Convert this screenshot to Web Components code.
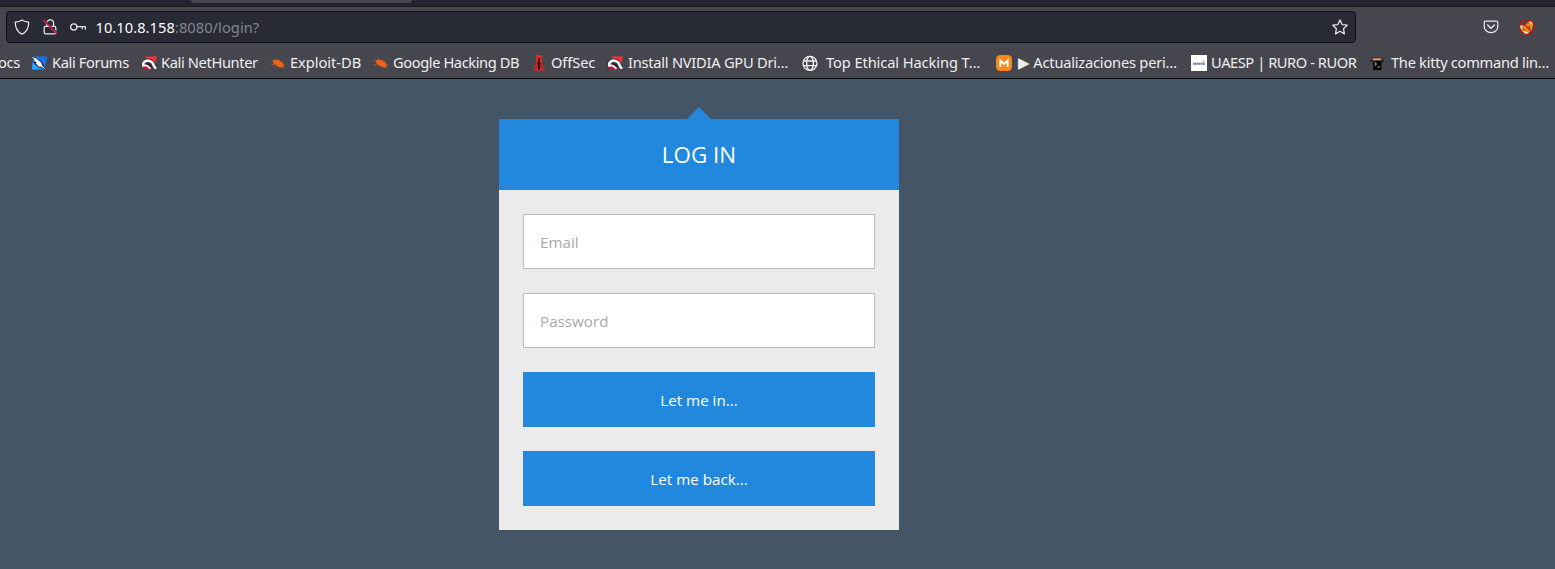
<!DOCTYPE html>
<html lang="en"><head><meta charset="utf-8"><title>Login</title>
<style>html,body{margin:0;height:100%;overflow:hidden}body{background:#456}</style></head>
<body>
<browser-window>
  <tab-strip slot="chrome"></tab-strip>
  <nav-bar slot="chrome"></nav-bar>
  <bookmarks-bar slot="chrome">
    <book-mark style="width:33px;margin-left:-2px;letter-spacing:-.3px">ocs</book-mark>
    <book-mark icon="forums" style="width:110px;--gap:5px;letter-spacing:-.38px">Kali Forums</book-mark>
    <book-mark icon="hunter" style="width:129px;letter-spacing:-.37px">Kali NetHunter</book-mark>
    <book-mark icon="bug" style="width:103px;letter-spacing:-.04px">Exploit-DB</book-mark>
    <book-mark icon="bug" style="width:158px;letter-spacing:-.41px">Google Hacking DB</book-mark>
    <book-mark icon="tower" style="width:76px;letter-spacing:-.1px">OffSec</book-mark>
    <book-mark icon="hunter" style="width:195px;--gap:5px;letter-spacing:-.25px">Install NVIDIA GPU Dri…</book-mark>
    <book-mark icon="globe" style="width:194px;--gap:8px;letter-spacing:-.1px">Top Ethical Hacking T…</book-mark>
    <book-mark icon="m" style="width:195px;--gap:6px;letter-spacing:-.22px">▶ Actualizaciones peri…</book-mark>
    <book-mark icon="uaesp" style="width:178px;letter-spacing:-.44px">UAESP | RURO - RUOR</book-mark>
    <book-mark icon="kitty" style="width:184px;--gap:6px;letter-spacing:-.29px">The kitty command lin…</book-mark>
  </bookmarks-bar>
  <login-card heading="LOG IN">
    <login-field label="Email"></login-field>
    <login-field label="Password" type="password"></login-field>
    <login-button>Let me in...</login-button>
    <login-button>Let me back...</login-button>
  </login-card>
</browser-window>
<script>
const define = (name, html, after) => customElements.define(name, class extends HTMLElement {
  constructor() {
    super();
    this.attachShadow({mode: "open"}).innerHTML = html;
  }
  connectedCallback() { if (after) after(this, this.shadowRoot); }
});

define("browser-window", `<style>
:host{display:flex;flex-direction:column;height:100vh;font-family:"Noto Sans",sans-serif;background:#456}
main{flex:1;display:flex;padding:40px 0 0 499px}
</style><slot name="chrome"></slot><main><slot></slot></main>`);

define("tab-strip", `<style>
:host{display:block;flex:none;box-sizing:border-box;height:7px;background:#23252e;border-bottom:1px solid #1b1c21}
div{margin-left:191px;width:221px;height:3px;background:#46464f;border-radius:0 0 4px 4px}
</style><div></div>`);

define("nav-bar", `<style>
:host{display:flex;flex:none;box-sizing:border-box;height:40px;background:#46464e;padding:4px 20px 4px 6px;align-items:center}
.url{display:flex;align-items:center;box-sizing:border-box;width:1350px;height:32px;background:#282a36;border:1px solid #101117;border-radius:4px;padding:0 7px}
svg{display:block;flex:none;width:16px;height:16px;fill:none;stroke:#e6e6e8;stroke-width:1.25;stroke-linejoin:round;stroke-linecap:round}
.address{font-size:14.67px;color:#858689;margin-left:9.5px;letter-spacing:.05px;flex:1;white-space:pre}
b{font-weight:400;color:#fbfbfe}
.lock,.key{margin-left:12px}
.pocket{margin-left:127px}
.fox{margin-left:20px}
</style>
<div class="url">
<svg viewBox="0 0 16 16"><path d="M8 .9C10 2.4 12.1 2.9 14.7 3.1c.1 5.7-1.5 9.8-6.7 12C2.8 12.9 1.2 8.8 1.3 3.1 3.9 2.9 6 2.4 8 .9Z"/></svg>
<svg class="lock" viewBox="0 0 16 16"><path d="M4.8 7V4.3a3.4 3.4 0 0 1 6.8 0V7M3.3 7.3h9.3q1.2 0 1.2 1.2v5q0 1.3-1.2 1.3H3.4q-1.2 0-1.2-1.3v-5q0-1 1.1-1.2"/><path d="m2.3 1 12.500 12.700" stroke="#282a36" stroke-width="1.5"/><path d="m1.5 1.3 13 13.2" stroke="#e8204c" stroke-width="1.6"/></svg>
<svg class="key" viewBox="0 0 16 16"><circle cx="3.8" cy="8" r="3.1"/><path d="M7 7.6h8.4v2.6M12.2 7.6v2.2"/></svg>
<span class="address"><b>10.10.8.158</b>:8080/login?</span>
<svg viewBox="0 0 16 16"><path d="m8 .9 2.1 4.7 5.1.6-3.7 3.5.9 5.2L8 12.3l-4.5 2.6.9-5.2L.8 6.2l5.1-.6Z"/></svg>
</div>
<svg class="pocket" viewBox="0 0 16 16"><path d="M2.4 2h11.2q1.2 0 1.2 1.2v4.2a6.8 6.2 0 0 1-13.6 0V3.2Q1.2 2 2.4 2Z"/><path d="m4.6 6 3.4 3.2L11.4 6" stroke-width="1.5"/></svg>
<svg class="fox" viewBox="0 0 16 16"><g stroke="none"><path d="m2 6 3 .5 3-2 3-3 2.2 1L14 7l-1.5 5L8 15l-5-1.5-1.5-4Z" fill="#e58a1c"/><path d="m11 1 2.8 2-.4 3.3-2-2ZM1 5.5l2.3 1.2-.8 3.5-1.2-1ZM4.5 12l3.5 1 2 2-4.5.2Z" fill="#f0e8de"/><path d="m4 10 2 .5-.6 1Zm5-2 2-1-.6 2Z" fill="#543018"/></g><circle cx="8" cy="8" r="7.4" stroke="#c80a10" stroke-width="1.1"/><path d="m3 3 10 10" stroke="#c80a10" stroke-width="1.1"/></svg>`);

define("bookmarks-bar", `<style>
:host{display:flex;flex:none;box-sizing:border-box;height:32px;background:#46464e;border-bottom:1px solid #0c0d12;align-items:center;overflow:hidden}
</style><slot></slot>`);

const ICONS = {
  forums: '<path d="M2 1.5h14l-2.4 13H1Z" fill="#1976f2"/><path d="M1.5 8 1 14.5h9Z" fill="#2ba0ff"/><path d="M0 1 4 2l7 5 2 4 3 4-5-2.5-4-.3L2.5 7 4 7Z" fill="#17202c"/><path d="m.3 1.4 5 2.1 4.7 4 1.4 3.2 3.8 4-4.7-3-3.1-.2L4.7 8l1.2-.3L2.5 5l1.2-.3Z" fill="#fff"/>',
  hunter: '<path d="M3.5 1.500H16L13.800 11 9 5Z" fill="#f5313a"/><path d="M.5 9.500 3 14.500h7.500L6 9Z" fill="#cc1238"/><path d="M2.200 10.800C.8 7.500 4.300 5.300 7.500 5.700c4 .5 5 3.300 5.500 5.500l2 2.600" fill="none" stroke="#202026" stroke-width="3.700"/><path d="M5 11c.4-1.700 2.600-1.800 3.300-.5l1.700 2.300" fill="none" stroke="#301018" stroke-width="2.500"/><path d="M3 11.500C.4 8 4.300 5.300 7.500 5.700c4 .5 5 3.300 5.500 5.500l2 2.600" fill="none" stroke="#fff" stroke-width="2.600"/><path d="M2.500 10.500c2-.2 3.500-.3 4.200.7l2.700 2.600" fill="none" stroke="#fff" stroke-width="1.900"/>',
  bug: '<path d="M2.300 6 5 4.500l3.900.8 3.500 2.200 1.600 2.900-1.500 2.300-3.600-.7-3-2-2.300-1.800Z" fill="#f26414"/><path d="m.8 5 3 2m1-4 .8 2.500M9 3.500v3m4-.5-1.500 2M.8 9.500h4.500m-.5 3 2.500-1.800m4 .9 3 1.400m-1-3h2.400" stroke="#b85a28" stroke-width=".7" fill="none"/>',
  tower: '<path d="M5 0h6v4l-.5 4L14 15.500H2L5.500 8 5 4Z" fill="#dd2828"/><path d="M7.200 3h1.600v4l1.200 2-1 1v4.500H7V10L6 9l1.200-2Z" fill="#360a10"/><path d="m4 14 2.500-3m5.500 3-2.500-3" stroke="#6b1018" stroke-width=".8"/>',
  globe: '<g fill="none" stroke="#f4f4f6" stroke-width="1.3"><circle cx="8" cy="8.300" r="7"/><ellipse cx="8" cy="8.300" rx="3.4" ry="7"/><path d="M1.400 6h13.200M1.400 10.700h13.200"/></g>',
  m: '<rect width="16" height="16" rx="4.2" fill="#f9881c"/><path d="M4.300 11.700V5.600L8 9l3.700-3.400v6.100" fill="none" stroke="#fff" stroke-width="2"/>',
  uaesp: '<path d="M0 0h16v16H0Z" fill="#fff"/><path d="M2 8.700h11" stroke="#6479b5" stroke-width="2" stroke-dasharray="1.6 .3"/><path d="M11.500 5.500h2v3h-2Z" fill="#dfbd68"/><path d="M12 9h2" stroke="#4560a8"/>',
  kitty: '<path d="m2 1 2 1.200h8L14 1l-.5 5h-11Z" fill="#5d3424"/><path d="M4 3.500h8v2.200H4Z" fill="#d9aa8b"/><path d="M1 5.200 4 6v1L1 6.500m14-1.300L12 6v1l3-.5" fill="#171719"/><path d="M4 5.500h8.400v9.500H4Z" fill="#000"/><path d="m5.600 7.500 2 1.500-2 1.500m3 1.500h2.200" fill="none" stroke="#d4d4d4"/>'
};
define("book-mark", `<style>
:host{display:flex;flex:none;align-items:center;font-size:14.67px;line-height:20px;color:#eeeeef;white-space:nowrap}
svg{display:block;flex:none;width:16px;height:16px;margin-right:var(--gap,4px)}
span{margin-top:-2px}
</style><span><slot></slot></span>`, (el, root) => {
  const name = el.getAttribute("icon");
  if (name && !root.querySelector("svg"))
    root.querySelector("span").insertAdjacentHTML("beforebegin", '<svg viewBox="0 0 16 16">' + ICONS[name] + "</svg>");
});

define("login-card", `<style>
:host{display:block;width:400px;height:411px;background:#ebebeb;font-family:"Open Sans",sans-serif}
header{position:relative;height:71px;background:#28d;color:#fff;display:flex;align-items:center;justify-content:center}
header::before{content:"";position:absolute;left:188px;top:-12px;border:12px solid transparent;border-top:0;border-bottom-color:#28d}
h1{margin:0;font-size:22.4px;font-weight:400;line-height:31px}
form{display:flex;flex-direction:column;gap:24px;padding:24px}
</style><header><h1></h1></header><form><slot></slot></form>`, (el, root) => {
  root.querySelector("h1").textContent = el.getAttribute("heading");
});

define("login-field", `<style>
:host{display:block;height:55px}
input{display:block;box-sizing:border-box;width:100%;height:55px;margin:0;padding:0 16px;border:1px solid #bbb;border-radius:0;background:#fff;outline:0;font:15.2px "Open Sans",sans-serif;color:#555}
input::placeholder{color:#a9a9a9;opacity:1}
</style><input>`, (el, root) => {
  const input = root.querySelector("input");
  input.type = el.getAttribute("type") || "text";
  input.placeholder = el.getAttribute("label");
});

define("login-button", `<style>
:host{display:block;height:55px}
button{display:block;width:100%;height:55px;border:0;padding:0;background:#28d;color:#fff;font:15.2px "Open Sans",sans-serif}
</style><button type="button"><slot></slot></button>`);
</script>
</body></html>
